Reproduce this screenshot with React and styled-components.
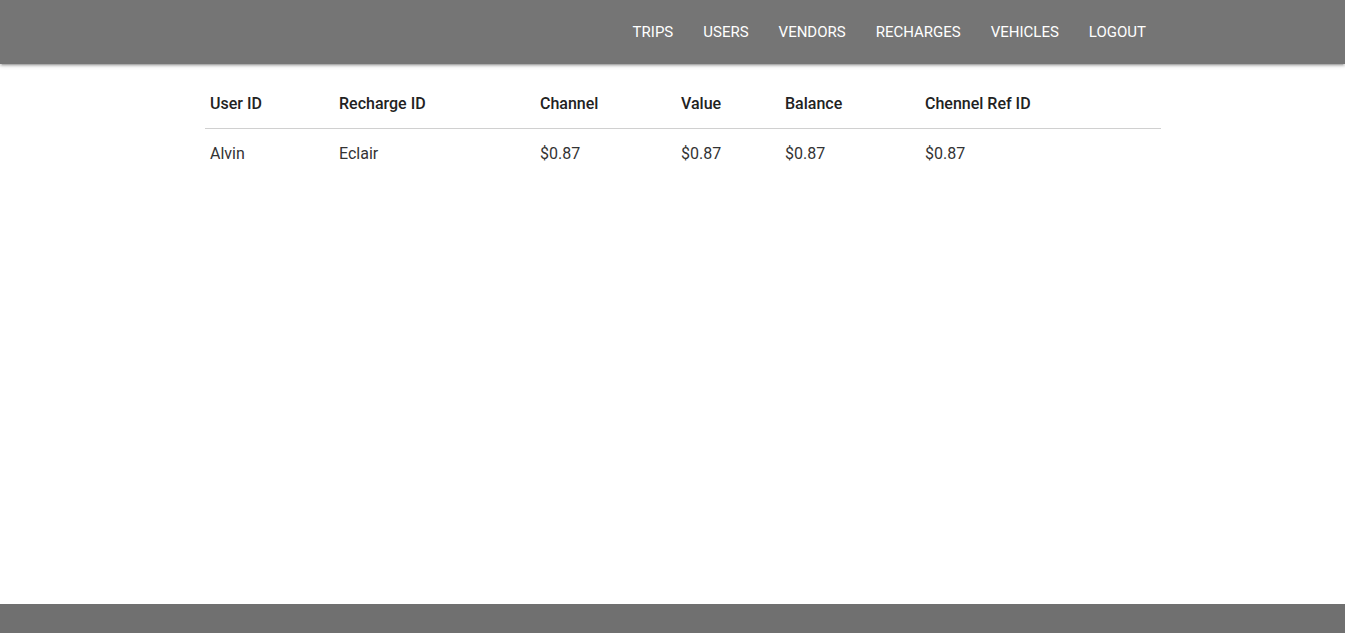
import React from "react";
import styled, { createGlobalStyle } from "styled-components";

const Global = createGlobalStyle`
  html { font-size: 15px; }
  body {
    margin: 0;
    font-family: Roboto, "Liberation Sans", sans-serif;
    color: rgba(0,0,0,0.87);
    background: #fff;
  }
  * { box-sizing: border-box; }
`;

const Page = styled.div`
  min-height: 100vh;
  display: flex;
  flex-direction: column;
`;

const Nav = styled.nav`
  height: 64px;
  background: #757575;
  box-shadow: 0 2px 2px 0 rgba(0,0,0,.14), 0 3px 1px -2px rgba(0,0,0,.12), 0 1px 5px 0 rgba(0,0,0,.2);
  position: relative;
  z-index: 1;
`;

const Container = styled.div`
  width: 956px;
  margin-left: calc(50% - 467.5px);
`;

const NavList = styled.ul`
  list-style: none;
  margin: 0;
  padding: 0;
  display: flex;
  justify-content: flex-end;
  height: 64px;
`;

const NavLink = styled.a`
  display: block;
  padding: 0 15px;
  line-height: 64px;
  color: #fff;
  font-size: 15px;
  text-decoration: none;
  cursor: pointer;
`;

const Main = styled.main`
  flex: 1;
  padding-top: 16px;
`;

const Table = styled.table`
  width: 100%;
  border-collapse: collapse;
  table-layout: fixed;
  font-size: 16px;
`;

const HeadRow = styled.tr`
  border-bottom: 1px solid #d0d0d0;
`;

const Th = styled.th`
  text-align: left;
  font-weight: 500;
  padding: 15px 5px;
  line-height: 18px;
  color: #222;
`;

const Td = styled.td`
  padding: 16px 5px 14px;
  line-height: 18px;
  font-weight: 400;
  color: #333;
`;

const Footer = styled.footer`
  height: 29px;
  background: #707070;
`;

const links = ["TRIPS", "USERS", "VENDORS", "RECHARGES", "VEHICLES", "LOGOUT"];
const cols = [
  { label: "User ID", w: 129 },
  { label: "Recharge ID", w: 201 },
  { label: "Channel", w: 141 },
  { label: "Value", w: 104 },
  { label: "Balance", w: 140 },
  { label: "Chennel Ref ID", w: 241 },
];
const rows = [["Alvin", "Eclair", "$0.87", "$0.87", "$0.87", "$0.87"]];

export default function App() {
  return (
    <Page>
      <Global />
      <Nav>
        <Container>
          <NavList>
            {links.map((l) => (
              <li key={l}>
                <NavLink>{l}</NavLink>
              </li>
            ))}
          </NavList>
        </Container>
      </Nav>
      <Main>
        <Container>
          <Table>
            <colgroup>
              {cols.map((c) => (
                <col key={c.label} style={{ width: c.w }} />
              ))}
            </colgroup>
            <thead>
              <HeadRow>
                {cols.map((c) => (
                  <Th key={c.label}>{c.label}</Th>
                ))}
              </HeadRow>
            </thead>
            <tbody>
              {rows.map((r, i) => (
                <tr key={i}>
                  {r.map((v, j) => (
                    <Td key={j}>{v}</Td>
                  ))}
                </tr>
              ))}
            </tbody>
          </Table>
        </Container>
      </Main>
      <Footer />
    </Page>
  );
}
